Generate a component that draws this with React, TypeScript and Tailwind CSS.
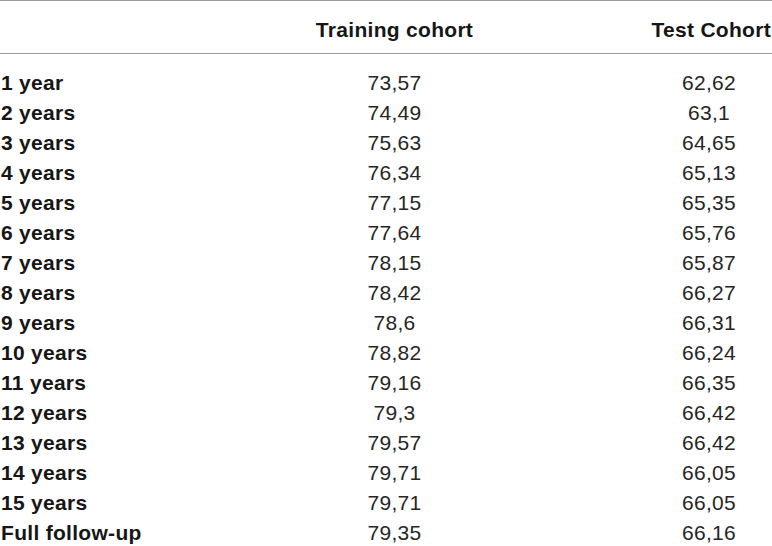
const rows: [string, string, string][] = [
  ["1 year", "73,57", "62,62"],
  ["2 years", "74,49", "63,1"],
  ["3 years", "75,63", "64,65"],
  ["4 years", "76,34", "65,13"],
  ["5 years", "77,15", "65,35"],
  ["6 years", "77,64", "65,76"],
  ["7 years", "78,15", "65,87"],
  ["8 years", "78,42", "66,27"],
  ["9 years", "78,6", "66,31"],
  ["10 years", "78,82", "66,24"],
  ["11 years", "79,16", "66,35"],
  ["12 years", "79,3", "66,42"],
  ["13 years", "79,57", "66,42"],
  ["14 years", "79,71", "66,05"],
  ["15 years", "79,71", "66,05"],
  ["Full follow-up", "79,35", "66,16"],
];

export default function App() {
  return (
    <div className="w-[772px] bg-white text-[#161616] text-[21px] leading-[30px] tracking-[0.3px] font-['Liberation_Sans',Arial,sans-serif]">
      {/* header */}
      <div className="grid grid-cols-[235px_319px_1fr] border-t border-b border-[#9a9a9a] pt-[14px] pb-[8px] font-bold">
        <div></div>
        <div className="text-center">Training cohort</div>
        <div className="text-right pr-[1px]">Test Cohort</div>
      </div>

      {/* body */}
      <div className="pt-[14px]">
        {rows.map(([label, train, test]) => (
          <div key={label} className="grid grid-cols-[235px_319px_1fr] h-[30px]">
            <div className="font-bold pl-[1px]">{label}</div>
            <div className="text-center text-[#262626]">{train}</div>
            <div className="flex justify-end">
              <span className="w-[126px] text-center text-[#262626]">{test}</span>
            </div>
          </div>
        ))}
      </div>
    </div>
  );
}
